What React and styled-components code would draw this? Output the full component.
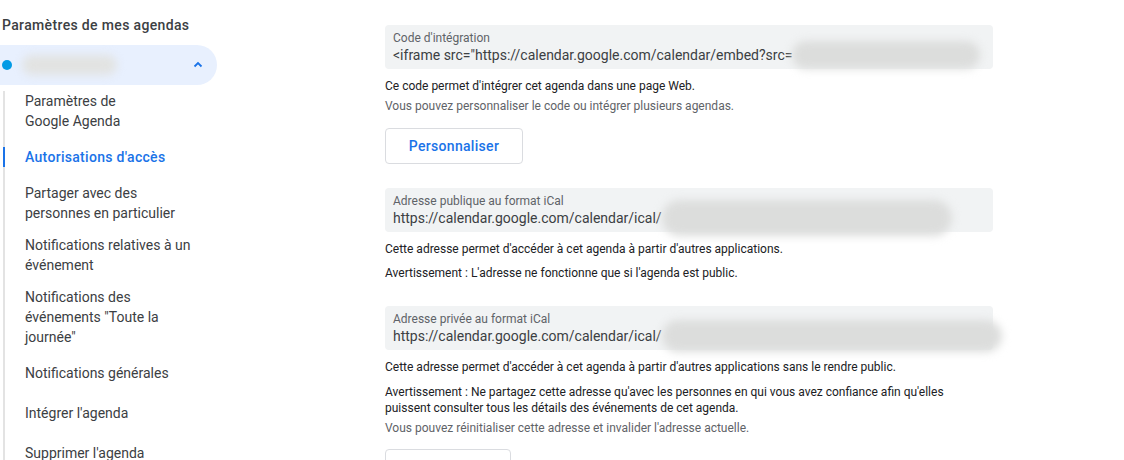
import React from "react";
import styled, { createGlobalStyle } from "styled-components";

const GlobalStyle = createGlobalStyle`
  body {
    margin: 0;
    background: #fff;
    font-family: Roboto, "Liberation Sans", Arial, sans-serif;
    overflow: hidden;
  }
`;

const navItems = [
  { lines: ["Paramètres de", "Google Agenda"], h: 56 },
  { lines: ["Autorisations d'accès"], h: 36, active: true },
  { lines: ["Partager avec des", "personnes en particulier"], h: 52 },
  { lines: ["Notifications relatives à un", "événement"], h: 52 },
  { lines: ["Notifications des", "événements \"Toute la", "journée\""], h: 76 },
  { lines: ["Notifications générales"], h: 40 },
  { lines: ["Intégrer l'agenda"], h: 40 },
  { lines: ["Supprimer l'agenda"], h: 40 },
];

const App = () => {
  return (
    <Page>
      <GlobalStyle />
      <Sidebar>
        <SideHeading>Paramètres de mes agendas</SideHeading>
        <CalendarRow>
          <Dot />
          <Blur w={95} h={20} light />
          <Chevron width="10" height="10" viewBox="0 0 10 10">
            <polyline points="1.5,6.5 5,3 8.5,6.5" fill="none" stroke="#1a73e8" strokeWidth="1.8" />
          </Chevron>
        </CalendarRow>
        <Nav>
          {navItems.map((item, i) => (
            <NavItem key={i} h={item.h} active={item.active}>
              {item.lines.map((l, j) => (
                <div key={j}>{l}</div>
              ))}
            </NavItem>
          ))}
        </Nav>
      </Sidebar>

      <Main>
        <FieldBox>
          <FieldLabel>Code d'intégration</FieldLabel>
          <FieldValue>
            <span>{'<iframe src="https://calendar.google.com/calendar/embed?src='}</span>
            <Blur w={188} h={28} />
          </FieldValue>
        </FieldBox>
        <Text top={9}>Ce code permet d'intégrer cet agenda dans une page Web.</Text>
        <Text top={4} muted>
          Vous pouvez personnaliser le code ou intégrer plusieurs agendas.
        </Text>
        <Button top={14} w={138}>Personnaliser</Button>

        <FieldBox top={24}>
          <FieldLabel>Adresse publique au format iCal</FieldLabel>
          <FieldValue>
            <span>https://calendar.google.com/calendar/ical/</span>
            <Blur w={290} h={36} />
          </FieldValue>
        </FieldBox>
        <Text top={9}>
          Cette adresse permet d'accéder à cet agenda à partir d'autres applications.
        </Text>
        <Text top={8}>
          Avertissement : L'adresse ne fonctionne que si l'agenda est public.
        </Text>

        <FieldBox top={25}>
          <FieldLabel>Adresse privée au format iCal</FieldLabel>
          <FieldValue>
            <span>https://calendar.google.com/calendar/ical/</span>
            <Blur w={340} h={32} />
          </FieldValue>
        </FieldBox>
        <Text top={9}>
          Cette adresse permet d'accéder à cet agenda à partir d'autres applications sans le rendre public.
        </Text>
        <Text top={9}>
          Avertissement : Ne partagez cette adresse qu'avec les personnes en qui vous avez confiance afin qu'elles
          <br />
          puissent consulter tous les détails des événements de cet agenda.
        </Text>
        <Text top={4} muted>
          Vous pouvez réinitialiser cette adresse et invalider l'adresse actuelle.
        </Text>
        <Button top={13} w={126}>Réinitialiser</Button>
      </Main>
    </Page>
  );
};

const Page = styled.div`
  display: flex;
  height: 460px;
  overflow: hidden;
`;

const Sidebar = styled.div`
  width: 217px;
  flex-shrink: 0;
  padding-top: 15px;
`;

const SideHeading = styled.div`
  font-size: 14px;
  line-height: 20px;
  font-weight: 500;
  letter-spacing: 0.35px;
  color: #3c4043;
  padding-left: 2px;
  margin-bottom: 10px;
`;

const CalendarRow = styled.div`
  height: 40px;
  display: flex;
  align-items: center;
  background: #e8f0fe;
  border-radius: 0 20px 20px 0;
  padding: 0 14px 0 2px;
`;

const Dot = styled.span`
  width: 10px;
  height: 10px;
  border-radius: 50%;
  background: #039be5;
  margin-right: 10px;
`;

const Blur = styled.span`
  display: inline-block;
  flex-shrink: 0;
  width: ${(p) => p.w}px;
  height: ${(p) => p.h}px;
  background: ${(p) => (p.light ? "#e2e3e2" : "#dcdddc")};
  border-radius: ${(p) => p.h / 2}px;
  filter: blur(4px);
`;

const Chevron = styled.svg`
  margin-left: auto;
`;

const Nav = styled.div`
  margin: 6px 0 0 3px;
  border-left: 2px solid #e3e3e3;
`;

const NavItem = styled.div`
  position: relative;
  height: ${(p) => p.h}px;
  padding-left: 20px;
  font-size: 14px;
  line-height: 20px;
  color: ${(p) => (p.active ? "#1a73e8" : "#3c4043")};
  font-weight: ${(p) => (p.active ? 500 : 400)};
  letter-spacing: ${(p) => (p.active ? "0.3px" : "0")};

  &::before {
    content: "";
    display: ${(p) => (p.active ? "block" : "none")};
    position: absolute;
    left: -2px;
    top: 0;
    width: 2px;
    height: 20px;
    background: #1a73e8;
  }
`;

const Main = styled.div`
  margin-left: 168px;
  padding-top: 25px;
  width: 640px;
`;

const FieldBox = styled.div`
  width: 592px;
  margin-top: ${(p) => p.top || 0}px;
  background: #f1f3f4;
  border-radius: 4px;
  padding: 6px 8px 4px;
`;

const FieldLabel = styled.div`
  font-size: 12px;
  line-height: 14px;
  color: #5f6368;
`;

const FieldValue = styled.div`
  display: flex;
  align-items: center;
  font-size: 14px;
  line-height: 20px;
  color: #3c4043;
  white-space: nowrap;
  height: 20px;
`;

const Text = styled.div`
  margin-top: ${(p) => p.top || 0}px;
  font-size: 12px;
  line-height: 16px;
  color: ${(p) => (p.muted ? "#5f6368" : "#202124")};
`;

const Button = styled.div`
  margin-top: ${(p) => p.top || 0}px;
  width: ${(p) => p.w}px;
  height: 36px;
  box-sizing: border-box;
  border: 1px solid #dadce0;
  border-radius: 4px;
  display: flex;
  align-items: center;
  justify-content: center;
  font-size: 14px;
  font-weight: 500;
  letter-spacing: 0.3px;
  color: #1a73e8;
`;

export default App;
